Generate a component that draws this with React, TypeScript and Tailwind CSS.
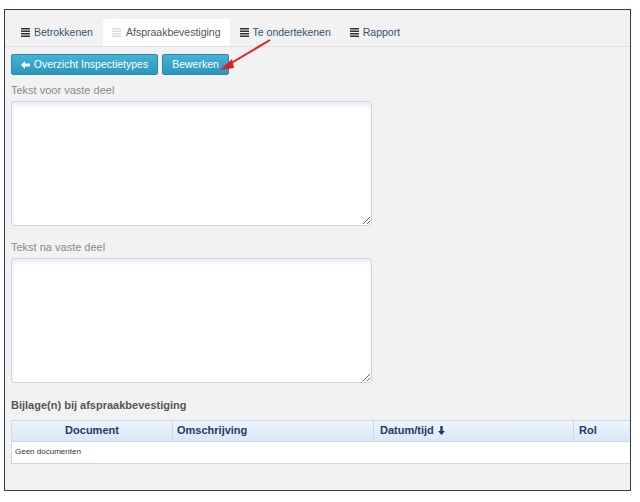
import React from 'react';

const ListIcon = ({ light = false }: { light?: boolean }) => (
  <svg width="9" height="9" viewBox="0 0 9 9" className="shrink-0">
    {[0, 2.5, 5, 7.5].map(y => (
      <rect key={y} x="0" y={y} width="9" height="1.5" fill={light ? '#dcdcdc' : '#333'} />
    ))}
  </svg>
);

const ArrowLeft = () => (
  <svg width="9" height="8" viewBox="0 0 9 8" className="shrink-0">
    <polygon points="0,4 4,0 4,2.6 9,2.6 9,5.4 4,5.4 4,8" fill="#fff" />
  </svg>
);

const ArrowDown = () => (
  <svg width="7" height="9" viewBox="0 0 7 9" className="shrink-0">
    <polygon points="2.3,0 4.7,0 4.7,5 7,5 3.5,9 0,5 2.3,5" fill="#1d3a66" />
  </svg>
);

const tabs = [
  { label: 'Betrokkenen', active: false },
  { label: 'Afspraakbevestiging', active: true },
  { label: 'Te ondertekenen', active: false },
  { label: 'Rapport', active: false },
];

const Field = ({ label }: { label: string }) => (
  <div className="flex flex-col">
    <div className="h-[22px] text-[11px] leading-[22px] text-[#8a8a8a]">{label}</div>
    <textarea className="h-[125px] w-[361px] resize-y rounded-[3px] border border-[#d4d4d4] bg-white shadow-[inset_0_3px_4px_rgba(180,200,230,0.35)] outline-none" />
  </div>
);

export default function App() {
  return (
    <div className="relative h-[502px] w-[640px] bg-white pl-[4px] pt-[9px]" style={{ fontFamily: '"Liberation Sans", Arial, sans-serif' }}>
      <div className="flex h-[482px] w-[627px] flex-col overflow-hidden border-[1.5px] border-[#2e3b57] bg-[#f2f2f2]">
        {/* tabs */}
        <div className="flex h-[37px] items-end gap-[1px] border-b border-[#e2e2e2] pl-[7px]">
          {tabs.map(t => (
            <div
              key={t.label}
              className={
                t.active
                  ? 'flex h-[27px] items-center gap-[5px] rounded-t-[3px] bg-white px-[9px] text-[10.5px] text-[#555]'
                  : 'flex h-[27px] items-center gap-[4px] px-[9px] text-[10.5px] text-[#34526e]'
              }
            >
              <ListIcon light={t.active} />
              <span>{t.label}</span>
            </div>
          ))}
        </div>

        <div className="flex flex-col pl-[6px]">
          {/* buttons */}
          <div className="mt-[7px] flex gap-[4px]">
            <button className="flex h-[21px] w-[147px] items-center justify-center gap-[4px] rounded-[2px] border border-[#2a8bb0] bg-gradient-to-b from-[#45b3d6] to-[#2c95bb] text-[10.5px] text-white">
              <ArrowLeft /> Overzicht Inspectietypes
            </button>
            <button className="flex h-[21px] w-[67px] items-center justify-center rounded-[2px] border border-[#2a8bb0] bg-gradient-to-b from-[#45b3d6] to-[#2c95bb] text-[10.5px] text-white">
              Bewerken
            </button>
          </div>

          <div className="mt-[4px] flex flex-col gap-[10px]">
            <Field label="Tekst voor vaste deel" />
            <Field label="Tekst na vaste deel" />
          </div>

          <div className="mt-[14px] text-[11px] font-bold text-[#555]">Bijlage(n) bij afspraakbevestiging</div>

          {/* table */}
          <div className="mt-[6px] border-b border-l border-[#d8d8d8] bg-white">
            <div className="flex h-[22px] border-y border-[#c9d8ea] bg-gradient-to-b from-[#eef4fc] to-[#d9e7f7] text-[11px] font-bold text-[#1d3a66]">
              <div className="flex w-[161px] items-center justify-center border-r border-[#c9d8ea]">Document</div>
              <div className="flex w-[201px] items-center border-r border-[#c9d8ea] pl-[4px]">Omschrijving</div>
              <div className="flex w-[200px] items-center gap-[4px] border-r border-[#c9d8ea] pl-[6px]">
                Datum/tijd <ArrowDown />
              </div>
              <div className="flex flex-1 items-center pl-[5px]">Rol</div>
            </div>
            <div className="flex h-[21px] items-center pl-[3px] text-[8px] text-[#333]">Geen documenten</div>
          </div>
        </div>
      </div>

      {/* red annotation arrow */}
      <svg className="pointer-events-none absolute left-0 top-0" width="640" height="502">
        <line x1="270" y1="40" x2="228" y2="65" stroke="#e02020" strokeWidth="2" />
        <polygon points="220,70 232,59 234,68" fill="#e02020" />
      </svg>
    </div>
  );
}
